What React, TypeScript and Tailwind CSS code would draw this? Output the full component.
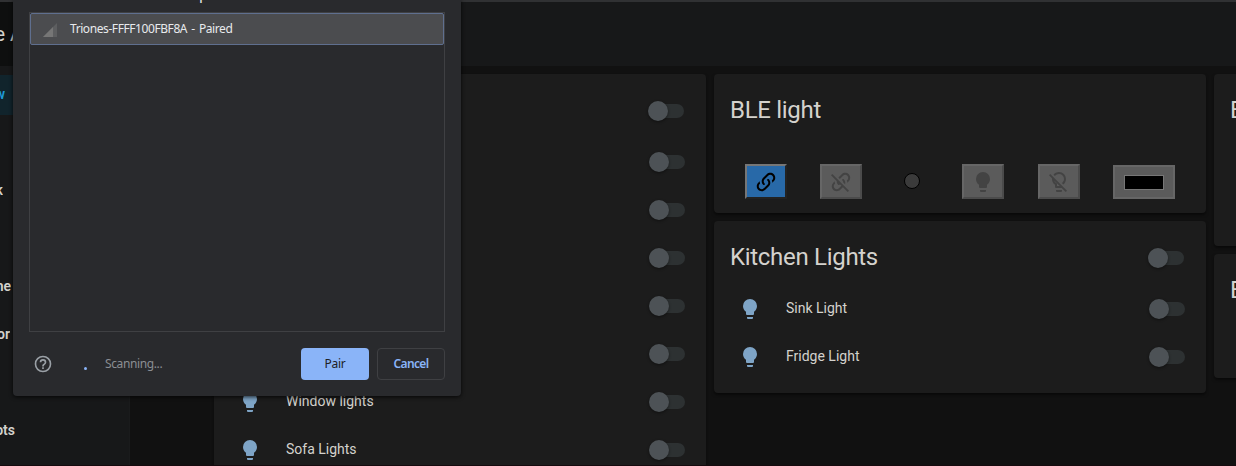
import type { ReactNode } from "react";

const PATHS = {
  bulb: "M12,2A7,7 0 0,0 5,9C5,11.38 6.19,13.47 8,14.74V17A1,1 0 0,0 9,18H15A1,1 0 0,0 16,17V14.74C17.81,13.47 19,11.38 19,9A7,7 0 0,0 12,2M9,21A1,1 0 0,0 10,22H14A1,1 0 0,0 15,21V20H9V21Z",
  bulbOff:
    "M12,2C9.76,2 7.78,3.05 6.5,4.68L7.93,6.11C8.84,4.84 10.32,4 12,4A5,5 0 0,1 17,9C17,10.68 16.16,12.16 14.89,13.06L16.31,14.5C17.94,13.21 19,11.24 19,9A7,7 0 0,0 12,2M3.28,4L2,5.27L5.04,8.3C5,8.53 5,8.76 5,9C5,11.38 6.19,13.47 8,14.74V17A1,1 0 0,0 9,18H14.73L18.73,22L20,20.72L3.28,4M7.23,10.5L12.73,16H10V13.58C8.68,13 7.66,11.88 7.23,10.5M9,20V21A1,1 0 0,0 10,22H14A1,1 0 0,0 15,21V20H9Z",
  link: "M10.59,13.41C11,13.8 11,14.44 10.59,14.83C10.2,15.22 9.56,15.22 9.17,14.83C7.22,12.88 7.22,9.71 9.17,7.76V7.76L12.71,4.22C14.66,2.27 17.83,2.27 19.78,4.22C21.73,6.17 21.73,9.34 19.78,11.29L18.29,12.78C18.3,11.96 18.17,11.14 17.89,10.36L18.36,9.88C19.54,8.71 19.54,6.81 18.36,5.64C17.19,4.46 15.29,4.46 14.12,5.64L10.59,9.17C9.41,10.34 9.41,12.24 10.59,13.41M13.41,9.17C13.8,8.78 14.44,8.78 14.83,9.17C16.78,11.12 16.78,14.29 14.83,16.24V16.24L11.29,19.78C9.34,21.73 6.17,21.73 4.22,19.78C2.27,17.83 2.27,14.66 4.22,12.71L5.71,11.22C5.7,12.04 5.83,12.86 6.11,13.65L5.64,14.12C4.46,15.29 4.46,17.19 5.64,18.36C6.81,19.54 8.71,19.54 9.88,18.36L13.41,14.83C14.59,13.66 14.59,11.76 13.41,10.59C13,10.2 13,9.56 13.41,9.17Z",
  linkOff:
    "M2,5.27L3.28,4L20,20.72L18.73,22L13.9,17.17L11.29,19.78C9.34,21.73 6.17,21.73 4.22,19.78C2.27,17.83 2.27,14.66 4.22,12.71L5.71,11.22C5.7,12.04 5.83,12.86 6.11,13.65L5.64,14.12C4.46,15.29 4.46,17.19 5.64,18.36C6.81,19.54 8.71,19.54 9.88,18.36L12.5,15.76L10.88,14.15C10.87,14.39 10.77,14.64 10.59,14.83C10.2,15.22 9.56,15.22 9.17,14.83C8.12,13.77 7.63,12.37 7.72,11L2,5.27M12.71,4.22C14.66,2.27 17.83,2.27 19.78,4.22C21.73,6.17 21.73,9.34 19.78,11.29L18.29,12.78C18.3,11.96 18.17,11.14 17.89,10.36L18.36,9.88C19.54,8.71 19.54,6.81 18.36,5.64C17.19,4.46 15.29,4.46 14.12,5.64L10.79,8.97L9.38,7.55L12.71,4.22M13.41,9.17C13.8,8.78 14.44,8.78 14.83,9.17C16.2,10.54 16.61,12.5 16.06,14.23L14.28,12.46C14.23,11.78 13.94,11.11 13.41,10.59C13,10.2 13,9.56 13.41,9.17Z",
  help: "M11,18H13V16H11V18M12,2A10,10 0 0,0 2,12A10,10 0 0,0 12,22A10,10 0 0,0 22,12A10,10 0 0,0 12,2M12,20C7.59,20 4,16.41 4,12C4,7.59 7.59,4 12,4C16.41,4 20,7.59 20,12C20,16.41 16.41,20 12,20M12,6A4,4 0 0,0 8,10H10A2,2 0 0,1 12,8A2,2 0 0,1 14,10C14,12 11,11.75 11,15H13C13,12.75 16,12.5 16,10A4,4 0 0,0 12,6Z",
};

function Icon({ name, className }: { name: keyof typeof PATHS; className: string }) {
  return (
    <svg viewBox="0 0 24 24" className={`shrink-0 fill-current ${className}`}>
      <path d={PATHS[name]} />
    </svg>
  );
}

function Toggle() {
  return (
    <div className="relative flex h-5 w-9 shrink-0 items-center justify-end">
      <div className="h-3.5 w-[34px] rounded-full bg-[#2d3132]" />
      <div className="absolute top-0 left-0 size-5 rounded-full bg-[#4d5256] shadow-[0_1px_3px_rgba(0,0,0,0.45)]" />
    </div>
  );
}

function Card({ className, children }: { className: string; children?: ReactNode }) {
  return (
    <section className={`rounded bg-[#1c1c1c] shadow-[0_2px_3px_rgba(0,0,0,0.5)] ${className}`}>
      {children}
    </section>
  );
}

function CardHeader({ title, toggle }: { title: string; toggle?: boolean }) {
  return (
    <div className="flex h-16 items-center pt-[9px] pr-[22px] pl-4">
      <h2 className="-mt-0.5 flex-1 text-2xl leading-8 tracking-[-0.3px] whitespace-nowrap">{title}</h2>
      {toggle && <Toggle />}
    </div>
  );
}

function LightRow({ name }: { name: string }) {
  return (
    <div className="flex h-12 items-center pr-[21px] pl-6">
      <Icon name="bulb" className="size-6 text-[#7ea4c6]" />
      <span className="-mt-0.5 ml-6 flex-1 text-sm">{name}</span>
      <Toggle />
    </div>
  );
}

function GrayButton({ name, className }: { name: keyof typeof PATHS; className: string }) {
  return (
    <button
      className={`flex h-[35px] w-[42px] items-center justify-center border-2 border-t-[#666] border-r-[#4b4b4b] border-b-[#4b4b4b] border-l-[#666] bg-[#5b5b5b] text-[#434343] ${className}`}
    >
      <Icon name={name} className="size-6" />
    </button>
  );
}

function NavItem({ text, className }: { text: string; className: string }) {
  return (
    <div className="flex h-12 items-center">
      <div className={`flex justify-end overflow-hidden text-sm font-semibold ${className}`}>{text}</div>
    </div>
  );
}

const firstCardLights = ["", "", "", "", "", "Window lights", "Sofa Lights"];

export default function App() {
  return (
    <div className="relative flex h-[466px] w-[1236px] overflow-hidden bg-[#111] font-[Roboto,sans-serif] text-[#d4d2cd]">
      <aside className="flex w-[130px] shrink-0 flex-col border-r border-[#1a1b1c] bg-[#171819]">
        <div className="flex h-[66px] shrink-0 items-center border-t-2 border-[#303133] bg-[#0e0f0f]">
          <span className="-ml-[5.5px] text-xl whitespace-nowrap">e A</span>
        </div>
        <div className="mt-[9px] flex h-10 shrink-0 items-center bg-[#11242c] text-[#1e9ad6]">
          <div className="-mt-0.5 flex w-[5px] justify-end overflow-hidden text-sm font-semibold">w</div>
        </div>
        <div className="mt-[51px] flex flex-col">
          <NavItem text="k" className="w-[3px]" />
          <div className="h-12" />
          <NavItem text="ne" className="w-[11px]" />
          <NavItem text="or" className="w-[10px]" />
          <div className="h-12" />
          <NavItem text="ots" className="w-[15px]" />
        </div>
      </aside>

      <div className="flex min-w-0 flex-1 flex-col">
        <header className="h-[66px] shrink-0 border-t-2 border-[#303133] bg-[#171819]" />
        <main className="flex min-h-0 flex-1 items-start gap-2 pt-2 pl-[84px]">
          <Card className="w-[492px] shrink-0">
            <CardHeader title="" toggle />
            {firstCardLights.map((name, i) => (
              <LightRow key={i} name={name} />
            ))}
          </Card>

          <div className="flex w-[492px] shrink-0 flex-col gap-2">
            <Card className="h-[139px]">
              <CardHeader title="BLE light" />
              <div className="mt-[26px] flex items-center pl-[31px]">
                <button className="flex h-[35px] w-[42px] items-center justify-center border-2 border-t-[#767676] border-r-[#222] border-b-[#222] border-l-[#767676] bg-[#2869a8] text-black">
                  <Icon name="link" className="size-6" />
                </button>
                <GrayButton name="linkOff" className="ml-[33px]" />
                <div className="mb-px ml-[42px] size-4 rounded-full border border-black bg-[#3b3b3b]" />
                <GrayButton name="bulb" className="ml-[42px]" />
                <GrayButton name="bulbOff" className="ml-[34px]" />
                <div className="mt-px ml-[33px] flex h-[34px] w-[62px] items-center justify-center border-2 border-[#666] bg-[#5b5b5b]">
                  <div className="h-[15px] w-10 border border-[#777] bg-black" />
                </div>
              </div>
            </Card>
            <Card className="h-[172px]">
              <CardHeader title="Kitchen Lights" toggle />
              <LightRow name="Sink Light" />
              <LightRow name="Fridge Light" />
            </Card>
          </div>

          <div className="flex w-[492px] shrink-0 flex-col gap-2">
            <Card className="h-[172px]">
              <CardHeader title="E" />
            </Card>
            <Card className="h-[124px]">
              <CardHeader title="E" />
            </Card>
          </div>
        </main>
      </div>

      <div className="absolute top-0 left-[13px] flex h-[396px] w-[448px] flex-col rounded-b bg-[#292a2d] px-4 font-['Noto_Sans',sans-serif] text-xs shadow-[0_1px_4px_rgba(0,0,0,0.8)]">
        <div className="flex h-3 items-end overflow-hidden pl-[170px]">
          <span className="mb-[9px] text-[15px] leading-5 text-[#e8eaed]">p</span>
        </div>
        <div className="h-80 border border-[#3f4043]">
          <div className="flex h-8 items-center rounded-[2px] border border-[#5f6f8f] bg-[#4b4c4f] text-[#e8eaed]">
            <svg viewBox="0 0 14 14" className="mt-0.5 ml-3 size-3.5">
              <path d="M0 14L14 0V14Z" fill="#5d5e60" />
              <path d="M0 14L10 4V14Z" fill="#767676" />
            </svg>
            <span className="ml-[13px] tracking-[-0.42px] [word-spacing:1.5px] whitespace-nowrap">
              Triones-FFFF100FBF8A - Paired
            </span>
          </div>
        </div>
        <div className="mt-4 flex h-8 items-center">
          <Icon name="help" className="ml-1 size-5 text-[#9aa0a6]" />
          <div className="mt-2 ml-[31px] size-[3px] rounded-full bg-[#8ab4f8]" />
          <span className="ml-[18px] flex-1 tracking-[-0.38px] text-[#8b8e93]">Scanning...</span>
          <button className="h-8 w-[68px] rounded bg-[#8ab4f8] tracking-[-0.3px] text-[#202124]">Pair</button>
          <button className="ml-2 h-8 w-[68px] rounded border border-[#3f4043] font-semibold tracking-[-0.6px] text-[#8ab4f8]">
            Cancel
          </button>
        </div>
      </div>
      <div className="absolute bottom-0 left-0 h-px w-full bg-[#160a0e]" />
    </div>
  );
}
